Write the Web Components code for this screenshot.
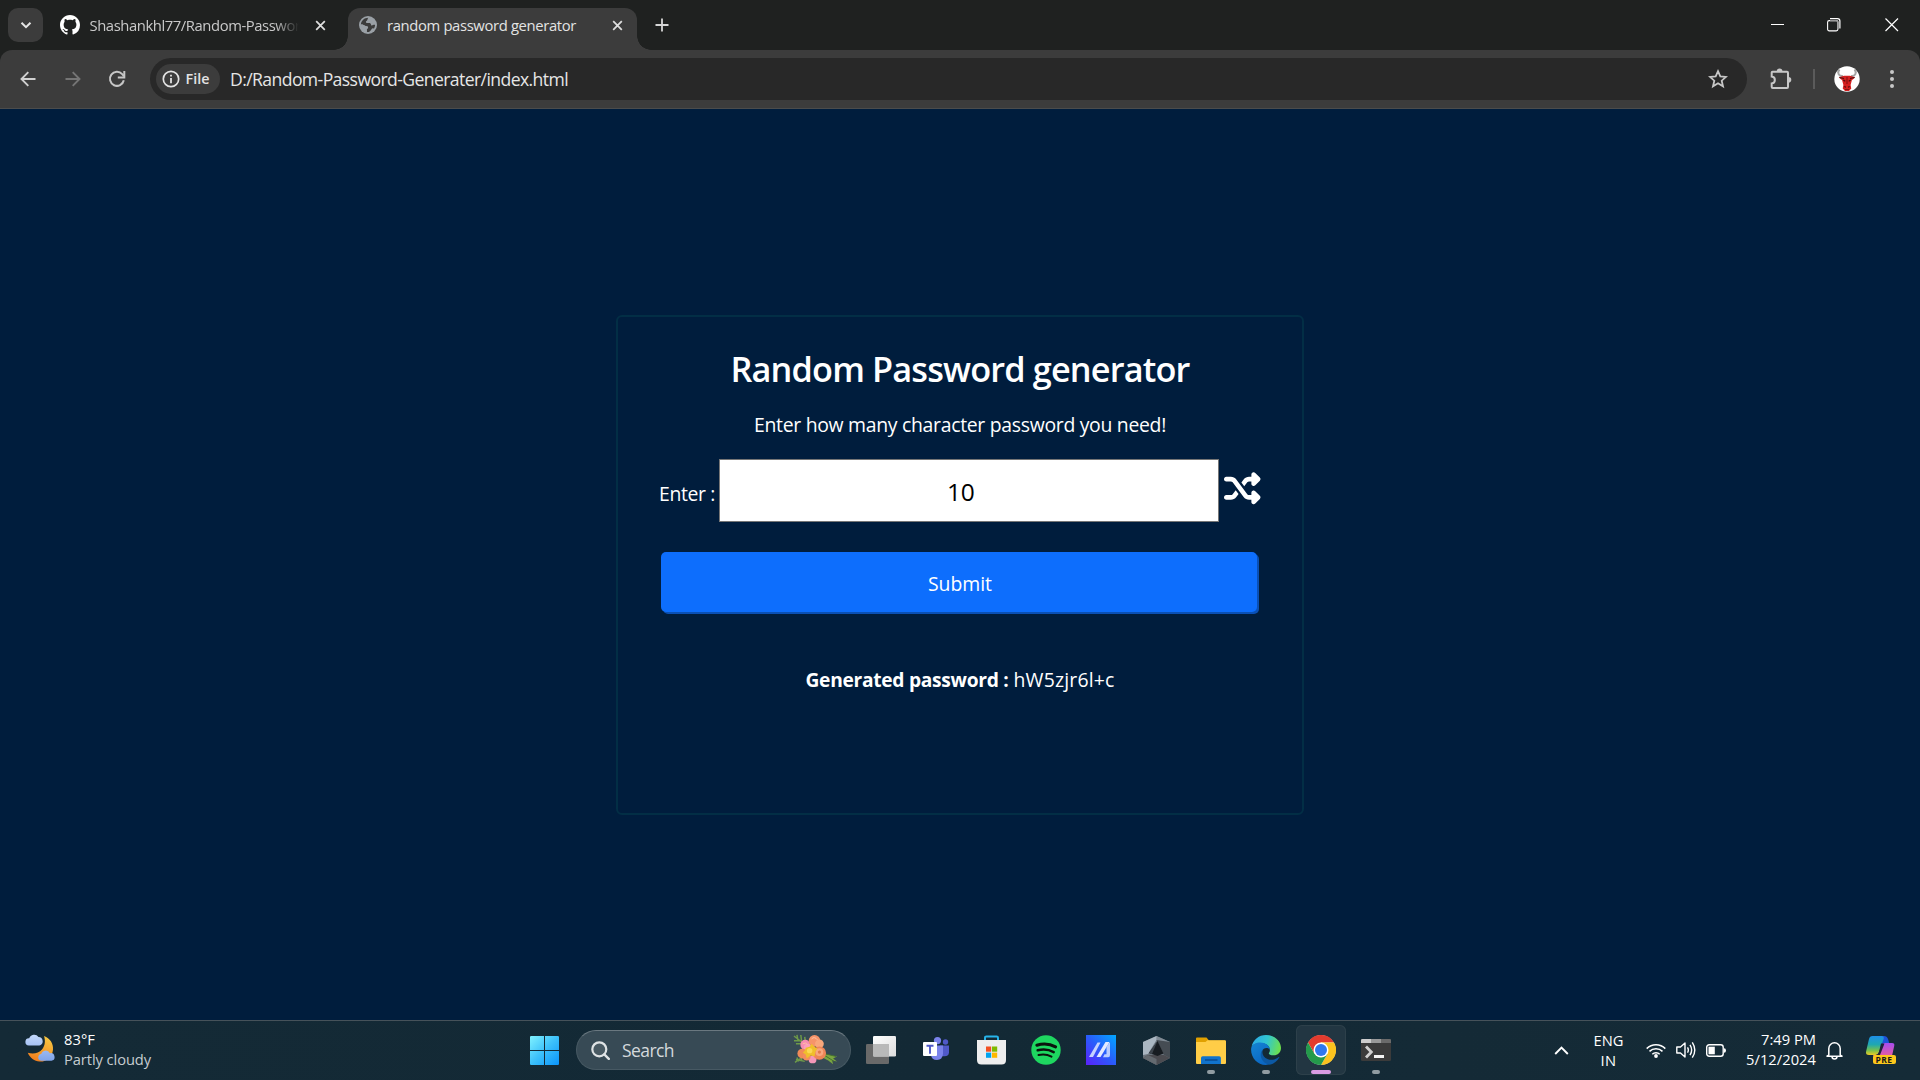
<!DOCTYPE html>
<html lang="en">
<head>
<meta charset="utf-8">
<title>random password generator</title>
<style>
html,body{margin:0;height:100%;overflow:hidden;background:#001d3d}
body{font-family:"Open Sans","Noto Sans",sans-serif}
</style>
</head>
<body>
<desktop-screen></desktop-screen>
<script>
const ICONS = {
  chevDown: ['0 0 12 8', '<path d="M1.5 1.8 6 6.2l4.5-4.4" fill="none" stroke="#e6e6e6" stroke-width="2"/>'],
  github: ['0 0 16 16', '<path fill="#fff" d="M8 0C3.58 0 0 3.58 0 8c0 3.54 2.29 6.53 5.47 7.59.4.07.55-.17.55-.38 0-.19-.01-.82-.01-1.49-2.01.37-2.53-.49-2.69-.94-.09-.23-.48-.94-.82-1.13-.28-.15-.68-.52-.01-.53.63-.01 1.08.58 1.23.82.72 1.21 1.87.87 2.33.66.07-.52.28-.87.51-1.07-1.78-.2-3.64-.89-3.64-3.95 0-.87.31-1.59.82-2.15-.08-.2-.36-1.02.08-2.12 0 0 .67-.21 2.2.82.64-.18 1.32-.27 2-.27s1.36.09 2 .27c1.53-1.04 2.2-.82 2.2-.82.44 1.1.16 1.92.08 2.12.51.56.82 1.27.82 2.15 0 3.07-1.87 3.75-3.65 3.95.29.25.54.73.54 1.48 0 1.07-.01 1.93-.01 2.2 0 .21.15.46.55.38A8.01 8.01 0 0 0 16 8c0-4.42-3.58-8-8-8z"/>'],
  x: ['0 0 12 12', '<path d="M1.3 1.3l9.4 9.4M10.700 1.300l-9.4 9.4" stroke="#dedede" stroke-width="1.9"/>'],
  globe: ['0 0 18 18', '<circle cx="9" cy="9" r="9" fill="#9aa0a6"/><path d="M9.300 1.800C8 3.300 9 4 7.800 4.700 6.500 5.300 6.800 6.600 7.600 6.900c1.300.4 3-.3 3.900.5 1 .9.100 1.700 1.100 2.100 1 .3 1.700-1 3.500-.6-.1 1.400-.5 2.700-1.200 3.800-1-.9-2-.2-2.400.6-.5 1.200-1.500 2.200-2.700 2.700-.8.1-1.500.1-2.100 0 .8-1.300-.2-1.700.1-2.700.4-1 1.500-.8 1.300-2.100C8.800 10 7 10.500 5.700 9.600 4.600 8.800 3.700 8.300 1.900 8.400 2.200 4.700 5.300 1.800 9.300 1.800z" fill="#3c3c3c"/><path d="M2 8.400c1.800-.1 2.700.5 3.800 1.300C7 10.500 8.600 10 9 11.200c.2 1.100-.9 1.100-1.300 2.100-.3.900.6 1.500-.1 2.700C4.300 15.500 1.700 12.400 2 8.400z" fill="#9aa0a6"/>'],
  plus: ['0 0 14 14', '<path d="M7 .5v13M.5 7h13" stroke="#d6d6d6" stroke-width="1.800"/>'],
  min: ['0 0 14 14', '<path d="M0 6.500h13" stroke="#fff"/>'],
  max: ['0 0 14 14', '<rect x=".6" y="2.600" width="10.300" height="10.300" rx="1.600" fill="#1f2120" stroke="#fff" stroke-width="1.100"/><path d="M3 .6h7.500q2.400 0 2.400 2.400v7.600" fill="none" stroke="#fff" stroke-width="1.200"/><path d="M3 2.600h6q2 0 2 2V11" fill="none" stroke="#999" stroke-width="1.400"/>'],
  winx: ['0 0 14 14', '<path d="M.5.5l12.500 12.500M13 .5L.5 13" stroke="#fff" stroke-width="1.200"/>'],
  back: ['0 0 16 16', '<path d="M15.500 8H2M8.300 1.200 1.500 8l6.800 6.800" fill="none" stroke="currentColor" stroke-width="1.900"/>'],
  fwd: ['0 0 16 16', '<path d="M.5 8H14M7.700 1.200 14.500 8l-6.800 6.800" fill="none" stroke="currentColor" stroke-width="1.900"/>'],
  reload: ['0 0 18 18', '<path d="M15.800 10.300A7 7 0 1 1 14.200 4.200L15.800 6" fill="none" stroke="#c7c7c7" stroke-width="2"/><path d="M16.300 1v6.400H9.800" fill="none" stroke="#c7c7c7" stroke-width="2"/>'],
  info: ['0 0 18 18', '<circle cx="9" cy="9" r="7.700" fill="none" stroke="#e3e3e3" stroke-width="1.700"/><path d="M9 8v5.200M9 4.700v1.800" stroke="#e3e3e3" stroke-width="1.800"/>'],
  star: ['0 0 20 20', '<path d="M10 2.200l2.300 5.200 5.700.5-4.300 3.800 1.300 5.600-5-3-5 3 1.300-5.600L2 7.900l5.700-.5z" fill="none" stroke="#c7c7c7" stroke-width="1.800"/>'],
  puzzle: ['0 0 22 22', '<path d="M2.500 3.700H17q1 0 1 1V19q0 1-1 1H2.700q-1 0-1-1v-3.600c4.200-.3 4.200-6.500 0-6.800V4.600q0-.9.800-.9z" fill="none" stroke="#c7c7c7" stroke-width="2"/><path d="M6.800 3.200a2.800 2.800 0 0 1 5.600 0zM18.500 8.900a2.800 2.800 0 0 1 0 5.600z" fill="#c7c7c7"/>'],
  bull: ['0 0 26 26', '<circle cx="13" cy="13" r="12.700" fill="#fff"/><path d="M9 10C4.500 10.500 3 6.500 5.500 3.500M17 10c4.500.5 6-3.500 3.500-6.500" fill="none" stroke="#a5a5a5" stroke-width="2"/><path d="M4.800 11.300 10 9.700h6l5.200 1.600-2.600 2.500H18l-1.400 5.200.7 3.500L15 25h-4l-2.300-2.500.7-3.500L8 13.800h-.6z" fill="#d42020"/><path d="M5.500 11.500l4.500 1M20.500 11.500l-4.500 1M9.300 14l2 1.200M16.700 14l-2 1.200M10.300 20.500l1.700.8M15.700 20.500l-1.700.8" stroke="#4a1010" stroke-width="1.200"/><path d="M13 11v7M11 23.500h4" stroke="#8c1414" stroke-width="1.200"/>'],
  dots: ['0 0 6 20', '<g fill="#c7c7c7"><circle cx="3" cy="3" r="2"/><circle cx="3" cy="10" r="2"/><circle cx="3" cy="17" r="2"/></g>'],
  shuffle: ['0 0 512 512', '<path fill="#fff" d="M403.800 34.400c12-5 25.700-2.200 34.900 6.900l64 64c6 6 9.400 14.100 9.400 22.600s-3.400 16.600-9.400 22.600l-64 64c-9.200 9.200-22.900 11.900-34.900 6.900s-19.800-16.600-19.800-29.600V160H352c-10.100 0-19.600 4.700-25.600 12.800L284 229.300 244 176l31.200-41.600C293.300 110.200 321.800 96 352 96h32V64c0-12.900 7.800-24.600 19.800-29.600zM164 282.700L204 336l-31.200 41.600C154.700 401.800 126.200 416 96 416H32c-17.700 0-32-14.300-32-32s14.300-32 32-32H96c10.100 0 19.600-4.700 25.600-12.800L164 282.700zm274.600 188c-9.200 9.200-22.900 11.900-34.900 6.900s-19.800-16.600-19.800-29.600V416H352c-30.200 0-58.700-14.200-76.800-38.400L121.600 172.800c-6-8.100-15.500-12.800-25.600-12.800H32c-17.700 0-32-14.300-32-32s14.300-32 32-32H96c30.200 0 58.700 14.200 76.800 38.400L326.400 339.200c6 8.100 15.500 12.800 25.600 12.800h32V320c0-12.900 7.800-24.600 19.800-29.600s25.700-2.200 34.900 6.900l64 64c6 6 9.400 14.100 9.400 22.600s-3.400 16.600-9.400 22.600l-64 64z"/>'],
  weather: ['0 0 30 28', '<defs><linearGradient id="m" x1=".7" y1="0" x2=".3" y2="1"><stop offset="0" stop-color="#f7c843"/><stop offset="1" stop-color="#f07c1c"/></linearGradient><linearGradient id="c" x1="0" y1="0" x2="0" y2="1"><stop offset="0" stop-color="#c3d8fb"/><stop offset="1" stop-color="#7fa4ea"/></linearGradient></defs><path d="M19 2c6 2.200 9.500 7.500 9 13.500C27.500 23 21.500 28 14.500 27.600 9.500 27.300 5 24.200 2.800 18.800 8 20.300 13.600 19.500 17 15.500 20.300 11.500 20.500 6.500 19 2z" fill="url(#m)"/><path d="M3.800 11.500a3.600 3.600 0 0 1 .4-7.200A5.200 5.200 0 0 1 13.500 3a4.300 4.300 0 0 1 .8 8.500zM16 26.700a3.400 3.400 0 0 1 .2-6.700 4.700 4.700 0 0 1 8.700-.8 3.800 3.800 0 0 1 1.600 7.500z" fill="url(#c)"/>'],
  start: ['0 0 29 29', '<defs><linearGradient id="w" x1="0" y1="0" x2="1" y2="1"><stop offset="0" stop-color="#80f2ff"/><stop offset=".5" stop-color="#3cc0fa"/><stop offset="1" stop-color="#0a94fb"/></linearGradient></defs><path fill="url(#w)" d="M.8 0H14v14H0V.8zM15 0h13.200l.8.8V14H15zM0 15h14v14H.8l-.8-.8zM15 15h14v13.200l-.8.800H15z"/>'],
  search: ['0 0 19 19', '<circle cx="8.300" cy="8.300" r="7" fill="#495a63" stroke="#dfe3e5" stroke-width="2.200"/><path d="M13.300 13.300l4.500 4.500" stroke="#dfe3e5" stroke-width="2.400" stroke-linecap="round"/>'],
  bouquet: ['0 0 46 32', '<g fill="none" stroke="#6e9a49" stroke-width="1.500"><path d="M1 2l14 11M4 1l1 5M8 1l1 8M1 7l6 0M3 10l8 0M12 3l1 8M2 29l13-9M4 24l2 4M8 22l1 5M3 26l9 2"/></g><path d="M30 20l15 3-4 2 4 3-5-1 1 4-5-4-8-4z" fill="#7aa640"/><path d="M31 21l11 7M32 20l12 3" stroke="#446f2f"/><circle cx="12.500" cy="11" r="5" fill="#f78db1"/><circle cx="15" cy="14" r="4" fill="#fb9fbd"/><circle cx="22" cy="7" r="6" fill="#f6946a"/><circle cx="27" cy="10" r="4.500" fill="#f9a77b"/><circle cx="9.500" cy="20" r="5" fill="#f08a58"/><circle cx="20" cy="26" r="4" fill="#f497b9"/><circle cx="14" cy="23" r="4" fill="#f28d5e"/><circle cx="27" cy="19.500" r="6.800" fill="#ef8657"/><circle cx="27" cy="18.500" r="4" fill="#f7a77e"/><circle cx="27" cy="18.500" r="1.600" fill="#e27a4c"/><path d="M13 14l4-1 2-3 3 3 3 2-2 3-1 5-4-1-4 3-1-4-3-2 2-2z" fill="#f0bf2c"/><circle cx="17" cy="17" r="2.800" fill="#fbd853"/><path d="M19 5q3-3 6 1M10 10q3-2 5 1" fill="none" stroke="#ffc3a4"/>'],
  taskview: ['0 0 30 28', '<defs><linearGradient id="t" x1="0" y1="0" x2="1" y2="1"><stop offset="0" stop-color="#fff"/><stop offset="1" stop-color="#dcdcdc"/></linearGradient></defs><rect y="8" width="23" height="20" rx="1.300" fill="#696969"/><rect x="7" width="23" height="20.500" rx="1.300" fill="url(#t)"/><path d="M7 8h16v12.500H8.300Q7 20.500 7 19.200z" fill="#b9b9b9"/>'],
  teams: ['0 0 26 24', '<circle cx="22.500" cy="5" r="2.700" fill="#5059c9"/><path d="M17 8.500h9v6.700q0 4-4.500 4H19z" fill="#5059c9"/><circle cx="14.500" cy="3.600" r="3.600" fill="#7b83eb"/><path d="M8 8.500h12v8.300q-.5 6.200-6 6.200t-6-5z" fill="#7b83eb"/><rect y="5" width="14" height="14" rx="1" fill="#fff"/><path d="M3.500 8.800h7M7 8.800v8" stroke="#5059c9" stroke-width="1.900"/>'],
  store: ['0 0 29 30', '<path d="M8 7V2.800Q8 1.400 9.400 1.400h10.200Q21 1.400 21 2.800V7" fill="none" stroke="#27b4ea" stroke-width="2"/><path d="M0 5h29v20q0 4.500-4.500 4.500h-20Q0 29.500 0 25z" fill="#eee"/><path d="M9 11.500h5.200v5.200H9z" fill="#f25022"/><path d="M15 11.500h5.200v5.200H15z" fill="#7fba00"/><path d="M9 17.600h5.200v5.200H9z" fill="#00a4ef"/><path d="M15 17.600h5.200v5.200H15z" fill="#ffb900"/>'],
  spotify: ['0 0 30 30', '<circle cx="15" cy="15" r="14.700" fill="#1ed760"/><g fill="none" stroke="#0b130d" stroke-linecap="round"><path d="M5.800 10.200c6.500-1.900 13.500-1.200 18.800 1.700" stroke-width="3"/><path d="M6.700 15.300c5.500-1.500 11.300-.8 16 1.800" stroke-width="2.500"/><path d="M7.500 20c4.700-1.200 9-.6 13 1.600" stroke-width="2"/></g>'],
  ma: ['0 0 30 30', '<defs><linearGradient id="a" x1="0" y1="1" x2="1" y2="0"><stop offset="0" stop-color="#5b20fa"/><stop offset=".5" stop-color="#2a5cfb"/><stop offset="1" stop-color="#00a8ff"/></linearGradient></defs><path fill="url(#a)" d="M0 0h30v30H0z"/><path d="M3 22h4l7.500-14.500h-3z" fill="#c5d2ff"/><path d="M10.500 22h4L23 8V7h-3.500z" fill="#e4ebff"/><path d="M20.500 11.500 24 7v13q0 2.200-1.800 2.200H17l1.500-3h2z" fill="#b9cdff"/>'],
  hex: ['0 0 27 29', '<path d="M13.500 0 27 6v16l-13.500 7L0 22V6z" fill="#6b747d"/><path d="M13.500 0 27 6l-4.500 1.500L13.500 4z" fill="#7f8a94"/><path d="M0 6 13.500 0v4L5 18l-5 1z" fill="#aab6c1"/><path d="M27 6v16l-6-3L13.500 4z" fill="#454c53"/><path d="M0 22l5-3h16l6 3-13.500 7z" fill="#4b4b50"/><path d="M0 22l5-3 8.500 4v6z" fill="#646a70"/><path d="M14.500 5l6 12.500-6 2.500L6 17z" fill="#171c21"/><path d="M14.500 5 6 17l3 1z" fill="#3c444c"/>'],
  folder: ['0 0 30 27', '<path d="M0 1.500Q0 .5 1 .5h9.500l2.500 3h16v6H0z" fill="#e0a000"/><path d="M0 5h9.500l2-1.700H29q1 0 1 1V26q0 1-1 1H1q-1 0-1-1z" fill="#ffcd47"/><path d="M5 27v-6q0-1.700 1.700-1.700h16.500q1.700 0 1.700 1.700v6z" fill="#1173cc"/><path d="M9 23h12.500" stroke="#0b4d94" stroke-width="1.600"/>'],
  edge: ['0 0 30 30', '<defs><linearGradient id="e1" x1="0" y1=".3" x2="1" y2=".5"><stop offset="0" stop-color="#2ba9e8"/><stop offset=".5" stop-color="#31c6d0"/><stop offset="1" stop-color="#6de04d"/></linearGradient><linearGradient id="e2" x1="0" y1="0" x2=".6" y2="1"><stop offset="0" stop-color="#1585d4"/><stop offset="1" stop-color="#0a66c2"/></linearGradient></defs><path d="M.5 12C2 4.500 8 0 15 0c9 0 15 6.500 15 13 0 4.500-3.300 7.300-7.300 7.300-3.400 0-5.200-1.200-4.800-2.200.3-.6 1-1.200 1-3.100C18.900 10.600 14 8 9.500 8 5 8 1.500 10 .5 12z" fill="url(#e1)"/><path d="M.2 13C1 9.500 5 7.500 9.300 7.500c5 0 9.600 3 9.600 7.500-1.500-3-6.900-2.500-7.900 1.500-1.500 6 3 11.500 8.500 12-1.500.9-3 1.400-4.800 1.500C6 30-.8 22 .2 13z" fill="url(#e2)"/><path d="M11.800 14.500c-2 6.500 4 11 9.700 10.300 2.400-.3 4.500-1.600 6.200-2.800.5-.3.900 0 .6.500-2 3.600-5.300 6.300-9.300 7.200C11 28.500 7 20 11.800 14.500z" fill="#0c59a4"/>'],
  chrome: ['0 0 48 48', '<circle cx="24" cy="24" r="23.500" fill="#fff"/><path d="M24 12h20.800A24 24 0 0 0 3.200 12l10.400 18z" fill="#e33b2e"/><path d="M34.400 30 24 48A24 24 0 0 0 44.800 12H24z" fill="#fcc31e"/><path d="M13.600 30 3.200 12A24 24 0 0 0 24 48l10.400-18z" fill="#249a4b"/><circle cx="24" cy="24" r="12" fill="#fff"/><circle cx="24" cy="24" r="9.600" fill="#2f78ee"/>'],
  terminal: ['0 0 30 22', '<rect width="30" height="22" rx="1.300" fill="#3b3b3b"/><path d="M1.300 0H10v4H0V1.300Q0 0 1.300 0z" fill="#cdcdcd"/><path d="M10 0h10v4H10z" fill="#999"/><path d="M20 0h8.700Q30 0 30 1.300V4H20z" fill="#6a6a6a"/><path d="M5 7.500 10.300 13 5 18.500" fill="none" stroke="#d0d0d0" stroke-width="2.800"/><path d="M13 17.500h10" stroke="#f4f4f4" stroke-width="3"/>'],
  up: ['0 0 15 9', '<path d="M1.200 8 7.500 1.700 13.800 8" fill="none" stroke="#fff" stroke-width="1.900"/>'],
  wifi: ['0 0 20 15', '<g fill="none" stroke="#fff" stroke-width="1.500"><path d="M.7 5.600a13.200 13.200 0 0 1 18.600 0M3.500 8.400a9.200 9.200 0 0 1 13 0M6.300 11.200a5.200 5.200 0 0 1 7.400 0"/></g><circle cx="10" cy="13" r="1.900" fill="#fff"/>'],
  speaker: ['0 0 20 18', '<g fill="none" stroke="#fff" stroke-width="1.400" stroke-linejoin="round"><path d="M.8 6h3.700L9 2v14L4.500 12H.8z"/><path d="M11.500 6.300q1.700 2.700 0 5.400M14 3.800q3.300 5.200 0 10.400M16.300 1.300q5 7.700 0 15.400"/></g>'],
  battery: ['0 0 20 13', '<rect x=".7" y=".7" width="16.500" height="11.600" rx="2.500" fill="none" stroke="#fff" stroke-width="1.400"/><path d="M2.500 2.700h6.300v7.600H2.500z" fill="#fff"/><path d="M18 4.300q2 0 2 2.200t-2 2.200z" fill="#fff"/>'],
  bell: ['0 0 17 19', '<path d="M2.800 14 1 15.200h15L14.200 14V7.500a5.700 5.700 0 0 0-11.400 0z" fill="none" stroke="#fff" stroke-width="1.500" stroke-linejoin="round"/><path d="M6 15.500a2.500 2.500 0 0 0 5 0" fill="none" stroke="#fff" stroke-width="1.500"/>'],
  copilot: ['0 0 29 24', '<defs><linearGradient id="p1" x1="0" y1="0" x2="0" y2="1"><stop offset="0" stop-color="#1e8fe8"/><stop offset=".45" stop-color="#1fa8b0"/><stop offset=".75" stop-color="#74c04f"/><stop offset="1" stop-color="#eccb23"/></linearGradient><linearGradient id="p2" x1="0" y1="0" x2="0" y2="1"><stop offset="0" stop-color="#a64df0"/><stop offset="1" stop-color="#f85f8a"/></linearGradient></defs><path d="M12 0h6q3 0 4 3l1.500 5-8 1z" fill="#1d52d8"/><path d="M6.500 0h9.200q2.800 0 1.900 3L13 16q-1 3-4 3H3Q-.8 19 .2 15L3 3q.7-3 3.500-3z" fill="url(#p1)"/><path d="M17.500 7H26q3 0 2.200 3L26 20q-1 4-4 4h-9q-4 0-6-5h3q3 0 4-3z" fill="url(#p2)"/><path d="M15 7.500h3.500L14 19h-4q2-.3 3-3z" fill="#20233c"/>']
};

const make = (tag, css, html) => customElements.define(tag, class extends HTMLElement {
  connectedCallback() {
    if (this.shadowRoot) return;
    const t = document.createElement('template');
    t.innerHTML = `<style>${css}</style>${html}`;
    this.attachShadow({ mode: 'open' }).append(t.content.cloneNode(true));
  }
});

customElements.define('ui-icon', class extends HTMLElement {
  connectedCallback() {
    if (this.shadowRoot) return;
    const [box, body] = ICONS[this.getAttribute('name')];
    const [, , bw, bh] = box.split(' ').map(Number);
    const w = +this.getAttribute('w') || bw;
    this.attachShadow({ mode: 'open' }).innerHTML =
      `<style>:host{display:block;flex:none;width:${w}px;height:${w * bh / bw}px}svg{display:block;width:100%;height:100%}</style><svg viewBox="${box}">${body}</svg>`;
  }
});

/* A line of text whose tracking is set so that it spans w pixels. */
customElements.define('ui-text', class extends HTMLElement {
  connectedCallback() {
    if (this.shadowRoot) return;
    const s = this.getAttribute('s'), w = +this.getAttribute('w'), lh = this.getAttribute('lh') || 20;
    this.attachShadow({ mode: 'open' }).innerHTML =
      `<style>:host{display:block;flex:none;width:${w}px;font-size:${s}px;line-height:${lh}px;height:${lh}px;white-space:pre}span{display:inline-block}</style><span><slot></slot></span>`;
    const span = this.shadowRoot.querySelector('span');
    const natural = span.getBoundingClientRect().width;
    span.style.letterSpacing = (w - natural) / this.textContent.length + 'px';
  }
});

make('tab-strip', `
:host{display:flex;height:50px;background:#1f2120;color:#c9c9c9;align-items:flex-start}
:host>*{flex:none}
.list{width:35px;height:34px;border-radius:10px;background:#3c3c3c;margin:8px 0 0 8px;display:flex;align-items:center;justify-content:center}
.idle{display:flex;align-items:center;width:305px;height:34px;margin-top:8px}
.idle ui-icon:first-child{margin-left:17px}
.idle .name{margin-left:9.500px;width:209px;overflow:hidden;-webkit-mask-image:linear-gradient(90deg,#000 185px,transparent 209px)}
.active{display:flex;align-items:center;box-sizing:border-box;width:289px;height:42px;margin-top:8px;padding:0 0 8px 11px;background:#3c3c3c;border-radius:12px 12px 0 0;color:#e3e3e3;position:relative}
.active:before,.active:after{content:"";position:absolute;bottom:0;width:14px;height:14px}
.active:before{left:-14px;background:radial-gradient(circle at 0 0,transparent 13.500px,#3c3c3c 14px)}
.active:after{right:-14px;background:radial-gradient(circle at 100% 0,transparent 13.500px,#3c3c3c 14px)}
.win{display:flex;margin-left:auto;padding:18px 21px 0 0}`,
`<div class="list"><ui-icon name="chevDown" w="12"></ui-icon></div>
<div class="idle"><ui-icon name="github" w="20"></ui-icon><div class="name"><ui-text s="14.800" w="211" lh="22">Shashankhl77/Random-Passwor</ui-text></div><ui-icon name="x" w="11" style="margin-left:16px"></ui-icon></div>
<div class="active"><ui-icon name="globe" w="18"></ui-icon><ui-text s="14.800" w="189" lh="22" style="margin-left:10px">random password generator</ui-text><ui-icon name="x" w="11" style="margin-left:36px"></ui-icon></div>
<ui-icon name="plus" w="14" style="margin:18px 0 0 18px"></ui-icon>
<div class="win"><ui-icon name="min"></ui-icon><ui-icon name="max" style="margin-left:42px"></ui-icon><ui-icon name="winx" style="margin-left:44px"></ui-icon></div>`);

make('tool-bar', `
:host{display:block;background:#1f2120}
.bar{display:flex;align-items:center;box-sizing:border-box;height:59px;background:#3c3c3c;border-radius:12px 12px 0 0;border-bottom:1px solid #4b4c4c;padding-left:19.500px;color:#d0d0d0}
.bar>*{flex:none}
.omni{display:flex;align-items:center;box-sizing:border-box;width:1597px;height:42px;border-radius:21px;background:#282828;margin-left:24px;padding:0 19.500px 0 6px}
.chip{display:flex;align-items:center;box-sizing:border-box;width:64px;height:30px;border-radius:15px;background:#3c3c3c;padding-left:6.500px;color:#e3e3e3;font-weight:600}
.sep{width:2px;height:20px;background:#5b5b5b;margin-left:20.500px}`,
`<div class="bar">
<ui-icon name="back" w="16"></ui-icon><ui-icon name="fwd" w="16" style="margin-left:29px;color:#757575"></ui-icon><ui-icon name="reload" w="18" style="margin-left:27.500px"></ui-icon>
<div class="omni"><div class="chip"><ui-icon name="info" w="18" style="margin-left:-.5px"></ui-icon><ui-text s="14.300" w="24" style="margin-left:5.500px">File</ui-text></div>
<ui-text s="17.600" w="338" lh="24" style="margin-left:10px;color:#e6e6e6">D:/Random-Password-Generater/index.html</ui-text><ui-icon name="star" w="20" style="margin-left:auto"></ui-icon></div>
<ui-icon name="puzzle" w="22" style="margin-left:23px"></ui-icon><div class="sep"></div><ui-icon name="bull" w="26" style="margin-left:19.500px"></ui-icon><ui-icon name="dots" w="6" style="margin-left:28.500px"></ui-icon>
</div>`);

make('password-card', `
:host{display:flex;flex-direction:column;align-items:center;box-sizing:border-box;width:688px;height:500px;border:2px solid #022e45;border-radius:6px;padding-top:32px;color:#fff}
h1,p{margin:0}
h1{font-weight:600}
.msg{margin-top:24px}
.row{display:flex;align-items:flex-start;width:604px;height:63px;margin-top:22px;padding-left:2px}
.field{box-sizing:border-box;width:499.500px;height:63px;border:1px solid #767676;background:#fff;color:#000;margin-left:4px;display:flex;padding-left:227px}
.btn{width:596px;height:60px;margin:30px 2px 0 0;border-radius:5px;background:#0d6efd;box-shadow:2px 2px 0 #0a50b5;display:flex;justify-content:center}
.out{display:flex;margin-top:55.500px}
b{font-weight:700}`,
`<h1><ui-text s="34.300" w="459" lh="40">Random Password generator</ui-text></h1>
<p class="msg"><ui-text s="19.400" w="412" lh="24">Enter how many character password you need!</ui-text></p>
<div class="row"><ui-text s="19.400" w="56" lh="24" style="margin-top:22.500px">Enter :</ui-text>
<div class="field"><ui-text s="24.500" w="27.500" lh="63">10</ui-text></div>
<ui-icon name="shuffle" w="36.500" style="margin:11px 0 0 5.500px"></ui-icon></div>
<div class="btn"><ui-text s="19.400" w="64" lh="63" style="margin-left:2px">Submit</ui-text></div>
<p class="out"><b><ui-text s="19.200" w="203" lh="24">Generated password :</ui-text></b><ui-text s="19.400" w="101" lh="24" style="margin-left:5px">hW5zjr6l+c</ui-text></p>`);

make('task-item', `
:host{display:flex;flex:none;box-sizing:border-box;width:50px;height:50px;margin-right:5px;align-items:center;justify-content:center;position:relative;border-radius:6px}
:host([active]){background:#223642;box-shadow:inset 0 0 0 1px #2d404a}
:host([open]):after{content:"";position:absolute;bottom:1px;left:21px;width:8px;height:4px;border-radius:2px;background:#919ca2}
:host([open]):host([active]):after{left:15px;width:20px;background:#d99be3}
:host([active]):after{left:15px;width:20px;background:#d99be3}`, `<slot></slot>`);

make('task-bar', `
:host{display:flex;box-sizing:border-box;height:60px;background:linear-gradient(90deg,#142a36,#132935 50%,#152b37);border-top:1px solid #46525a;color:#fff;align-items:flex-start}
:host>*{flex:none}
.weather{display:flex;width:530px;padding:13px 0 0 25px;box-sizing:border-box}
.col{display:flex;flex-direction:column}
.apps{display:flex;align-items:center;padding-top:4px}
.pill{display:flex;align-items:center;box-sizing:border-box;width:275px;height:40px;border-radius:20px;background:#374a55;border:1px solid #475963;border-top-color:#6a7880;padding:0 12px 0 14px;margin:0 5px 0 17px;color:#d4d9dc}
.tray{display:flex;align-items:center;margin-left:auto;height:58px}
.pre{position:absolute;left:6.500px;top:19.500px;width:23px;height:9px;border-radius:2px;background:#fcc71b;color:#181818;font-weight:700;display:flex;justify-content:center}
.cop{position:relative;width:30px;height:29px;margin:0 24px 0 23px}`,
`<div class="weather"><ui-icon name="weather" w="30"></ui-icon><div class="col" style="margin:-5.500px 0 0 9px"><ui-text s="14.700" w="31">83°F</ui-text><ui-text s="14.700" w="87" style="color:#c5ccd0">Partly cloudy</ui-text></div></div>
<div class="apps"><ui-icon name="start" w="29"></ui-icon>
<div class="pill"><ui-icon name="search" w="19"></ui-icon><ui-text s="17.500" w="52" lh="24" style="margin-left:12px">Search</ui-text><ui-icon name="bouquet" w="45" style="margin-left:auto"></ui-icon></div>
<task-item><ui-icon name="taskview" w="30"></ui-icon></task-item>
<task-item><ui-icon name="teams" w="26" style="margin-top:-2px"></ui-icon></task-item>
<task-item><ui-icon name="store" w="29"></ui-icon></task-item>
<task-item><ui-icon name="spotify" w="30"></ui-icon></task-item>
<task-item><ui-icon name="ma" w="30"></ui-icon></task-item>
<task-item><ui-icon name="hex" w="27"></ui-icon></task-item>
<task-item open><ui-icon name="folder" w="30"></ui-icon></task-item>
<task-item open><ui-icon name="edge" w="30"></ui-icon></task-item>
<task-item open active><ui-icon name="chrome" w="30"></ui-icon></task-item>
<task-item open><ui-icon name="terminal" w="30"></ui-icon></task-item></div>
<div class="tray"><ui-icon name="up" w="15"></ui-icon>
<div class="col" style="align-items:center;margin:-1px 0 0 25px"><ui-text s="14.700" w="30">ENG</ui-text><ui-text s="14.700" w="16">IN</ui-text></div>
<ui-icon name="wifi" w="20" style="margin-left:22px"></ui-icon><ui-icon name="speaker" w="20" style="margin-left:10px"></ui-icon><ui-icon name="battery" w="20" style="margin-left:10px"></ui-icon>
<div class="col" style="align-items:flex-end;margin:-2px 0 0 20.500px"><ui-text s="14.700" w="55">7:49 PM</ui-text><ui-text s="14.700" w="70">5/12/2024</ui-text></div>
<ui-icon name="bell" w="17" style="margin-left:10px"></ui-icon>
<div class="cop"><ui-icon name="copilot" w="29"></ui-icon><div class="pre"><ui-text s="8.500" w="17" lh="9">PRE</ui-text></div></div></div>`);

make('desktop-screen', `
:host{display:flex;flex-direction:column;width:1920px;height:1080px;background:#001d3d}
main{flex:1;display:flex;justify-content:center;align-items:flex-start;padding-top:206px;box-sizing:border-box}
tab-strip,tool-bar,task-bar{flex:none}`,
`<tab-strip></tab-strip><tool-bar></tool-bar><main><password-card></password-card></main><task-bar></task-bar>`);
</script>
</body>
</html>
